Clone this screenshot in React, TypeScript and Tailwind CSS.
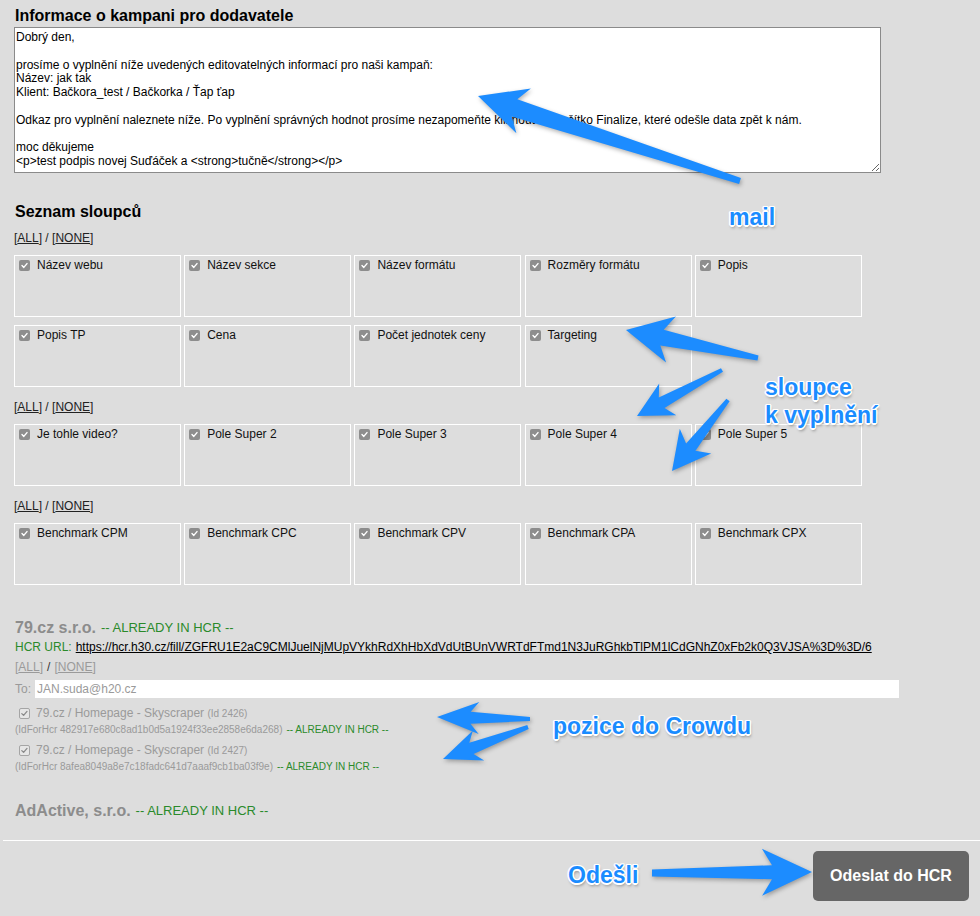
import React from 'react';

const columnGroups: string[][] = [
  ['Název webu', 'Název sekce', 'Název formátu', 'Rozměry formátu', 'Popis', 'Popis TP', 'Cena', 'Počet jednotek ceny', 'Targeting'],
  ['Je tohle video?', 'Pole Super 2', 'Pole Super 3', 'Pole Super 4', 'Pole Super 5'],
  ['Benchmark CPM', 'Benchmark CPC', 'Benchmark CPV', 'Benchmark CPA', 'Benchmark CPX'],
];

const mailText =
  'Dobrý den,\n\nprosíme o vyplnění níže uvedených editovatelných informací pro naši kampaň:\nNázev: jak tak\nKlient: Bačkora_test / Bačkorka / Ťap ťap\n\nOdkaz pro vyplnění naleznete níže. Po vyplnění správných hodnot prosíme nezapomeňte kliknout na tlačítko Finalize, které odešle data zpět k nám.\n\nmoc děkujeme\n<p>test podpis novej Suďáček a <strong>tučně</strong></p>';

const hcrUrl =
  'https://hcr.h30.cz/fill/ZGFRU1E2aC9CMlJuelNjMUpVYkhRdXhHbXdVdUtBUnVWRTdFTmd1N3JuRGhkbTlPM1lCdGNhZ0xFb2k0Q3VJSA%3D%3D/6';

// annotation arrows: tail x,y -> tip x,y, head length, head width, neck width, tail width
const arrows: number[][] = [
  [740, 181, 478, 96, 48, 47, 18, 6],
  [758, 358, 626, 330, 46, 47, 16, 5],
  [722, 370, 637, 416, 35, 36, 12, 4],
  [728, 400, 672, 471, 38, 40, 12, 4],
  [530, 719, 437, 717, 42, 32, 12, 4],
  [528, 727, 443, 759, 38, 32, 12, 4],
  [652, 873, 812, 872, 50, 47, 14, 7],
];

function arrowPoints([x1, y1, x2, y2, head, hw, neck, tail]: number[]) {
  const dx = x2 - x1;
  const dy = y2 - y1;
  const len = Math.hypot(dx, dy);
  const ux = dx / len;
  const uy = dy / len;
  const nx = -uy;
  const ny = ux;
  const bx = x2 - ux * head;
  const by = y2 - uy * head;
  const kx = x2 - ux * head * 0.8;
  const ky = y2 - uy * head * 0.8;
  const pts = [
    [x1 + (nx * tail) / 2, y1 + (ny * tail) / 2],
    [kx + (nx * neck) / 2, ky + (ny * neck) / 2],
    [bx + (nx * hw) / 2, by + (ny * hw) / 2],
    [x2, y2],
    [bx - (nx * hw) / 2, by - (ny * hw) / 2],
    [kx - (nx * neck) / 2, ky - (ny * neck) / 2],
    [x1 - (nx * tail) / 2, y1 - (ny * tail) / 2],
  ];
  return pts.map((p) => p.map((v) => v.toFixed(1)).join(',')).join(' ');
}

const FilledCheck = () => (
  <span className="w-[11px] h-[11px] rounded-[2px] bg-[#8d8d8d] flex items-center justify-center shrink-0">
    <svg width="9" height="9" viewBox="0 0 9 9">
      <path d="M2 4.6 L3.8 6.4 L7 2.6" fill="none" stroke="#fff" strokeWidth="1.4" strokeLinecap="round" strokeLinejoin="round" />
    </svg>
  </span>
);

const DisabledCheck = () => (
  <span className="w-[11px] h-[11px] rounded-[2px] border border-[#a5a5a5] bg-[#e6e6e6] flex items-center justify-center shrink-0">
    <svg width="9" height="9" viewBox="0 0 9 9">
      <path d="M1.8 4.6 L3.6 6.4 L7 2.4" fill="none" stroke="#8a8a8a" strokeWidth="1.3" strokeLinecap="round" strokeLinejoin="round" />
    </svg>
  </span>
);

const AllNone = () => (
  <div className="h-[14px] leading-[14px] text-[12px] text-[#222]">
    [<span className="underline">ALL</span>] / [<span className="underline">NONE</span>]
  </div>
);

const labelCls =
  "absolute text-[23px] leading-[23px] font-bold text-[#1a8cff] whitespace-nowrap [text-shadow:1.5px_0_0_#fff,-1.5px_0_0_#fff,0_1.5px_0_#fff,0_-1.5px_0_#fff,1px_1px_0_#fff,-1px_-1px_0_#fff,1px_-1px_0_#fff,-1px_1px_0_#fff,1px_3px_3px_rgba(0,0,0,0.35)]";

export default function App() {
  return (
    <div className="relative w-full h-[916px] overflow-hidden bg-[#dddddd] text-black font-['Liberation_Sans',Arial,sans-serif]">
      <div className="pl-[14px] pt-[7px]">
        {/* Mail */}
        <h2 className="text-[16px] leading-[18px] font-bold pl-[1px] mb-[2px]">Informace o kampani pro dodavatele</h2>
        <textarea
          defaultValue={mailText}
          spellCheck={false}
          className="block w-[867px] h-[146px] bg-white border border-[#8a8a8a] px-[1px] pt-[3px] text-[12px] leading-[13.8px] text-black outline-none font-['Liberation_Sans',Arial,sans-serif]"
        />

        {/* Columns */}
        <h2 className="text-[16px] leading-[18px] font-bold pl-[1px] mt-[30px] mb-[10px]">Seznam sloupců</h2>
        {columnGroups.map((group, gi) => (
          <div key={gi} className="mb-[13px]">
            <AllNone />
            <div className="mt-[10px] flex flex-wrap gap-x-[3.2px] gap-y-[8px] w-[852px]">
              {group.map((col) => (
                <div key={col} className="w-[167px] h-[62px] border border-white pl-[4px] pt-[2px]">
                  <div className="flex items-center h-[14px] gap-[7px]">
                    <FilledCheck />
                    <span className="text-[12px] leading-[14px] text-[#111]">{col}</span>
                  </div>
                </div>
              ))}
            </div>
          </div>
        ))}

        {/* Suppliers */}
        <div className="mt-[33px] pl-[1px]">
          <div className="h-[19px] flex items-center gap-[5px]">
            <span className="text-[16px] font-bold text-[#8c8c8c]">79.cz s.r.o.</span>
            <span className="text-[13px] text-[#2a8a2a]">-- ALREADY IN HCR --</span>
          </div>
          <div className="h-[20px] flex items-center text-[12px] whitespace-nowrap">
            <span className="text-[#2a8a2a]">HCR URL:</span>
            <span className="ml-[4px] underline text-black">{hcrUrl}</span>
          </div>
          <div className="h-[20px] flex items-center text-[12px] text-[#9a9a9a]">
            [<span className="underline">ALL</span>]<span className="text-[#333] mx-[4px]">/</span>[<span className="underline">NONE</span>]
          </div>
          <div className="h-[24px] flex items-center text-[12px] text-[#9a9a9a]">
            <span className="w-[20px]">To:</span>
            <div className="w-[864px] h-[18px] bg-white flex items-center pl-[2px]">JAN.suda@h20.cz</div>
          </div>

          <div className="mt-[4px]">
            {[
              ['2426', '482917e680c8ad1b0d5a1924f33ee2858e6da268'],
              ['2427', '8afea8049a8e7c18fadc641d7aaaf9cb1ba03f9e'],
            ].map(([id, hcr], i) => (
              <div key={id} className={i > 0 ? 'mt-[5px]' : ''}>
                <div className="h-[16px] flex items-center pl-[4px] gap-[6px] text-[#9a9a9a]">
                  <DisabledCheck />
                  <span className="text-[12px]">
                    79.cz / Homepage - Skyscraper <span className="text-[10px]">(Id {id})</span>
                  </span>
                </div>
                <div className="h-[16px] flex items-center text-[10px] whitespace-nowrap">
                  <span className="text-[#9a9a9a]">(IdForHcr {hcr})</span>
                  <span className="ml-[4px] text-[#2a8a2a]">-- ALREADY IN HCR --</span>
                </div>
              </div>
            ))}
          </div>

          <div className="mt-[28px] h-[18px] flex items-center gap-[5px]">
            <span className="text-[16px] font-bold text-[#8c8c8c]">AdActive, s.r.o.</span>
            <span className="text-[13px] text-[#2a8a2a]">-- ALREADY IN HCR --</span>
          </div>
        </div>
      </div>

      {/* Footer */}
      <div className="mt-[20px] ml-[3px] border-t border-white flex justify-end pt-[10px] pr-[11px]">
        <button className="w-[156px] h-[50px] rounded-[5px] bg-[#666666] text-white text-[16px] font-bold">
          Odeslat do HCR
        </button>
      </div>

      {/* Annotations */}
      <svg
        className="absolute left-0 top-0 pointer-events-none drop-shadow-[1px_2px_2px_rgba(0,0,0,0.3)]"
        width="980"
        height="916"
        viewBox="0 0 980 916"
      >
        {arrows.map((a, i) => (
          <polygon key={i} points={arrowPoints(a)} fill="#1c8cff" strokeLinejoin="round" />
        ))}
      </svg>
      <div className={labelCls + ' left-[729px] top-[206px]'}>mail</div>
      <div className={labelCls + ' left-[765px] top-[376px]'}>sloupce</div>
      <div className={labelCls + ' left-[765px] top-[404px]'}>k vyplnění</div>
      <div className={labelCls + ' left-[553px] top-[715px]'}>pozice do Crowdu</div>
      <div className={labelCls + ' left-[568px] top-[864px]'}>Odešli</div>
    </div>
  );
}
